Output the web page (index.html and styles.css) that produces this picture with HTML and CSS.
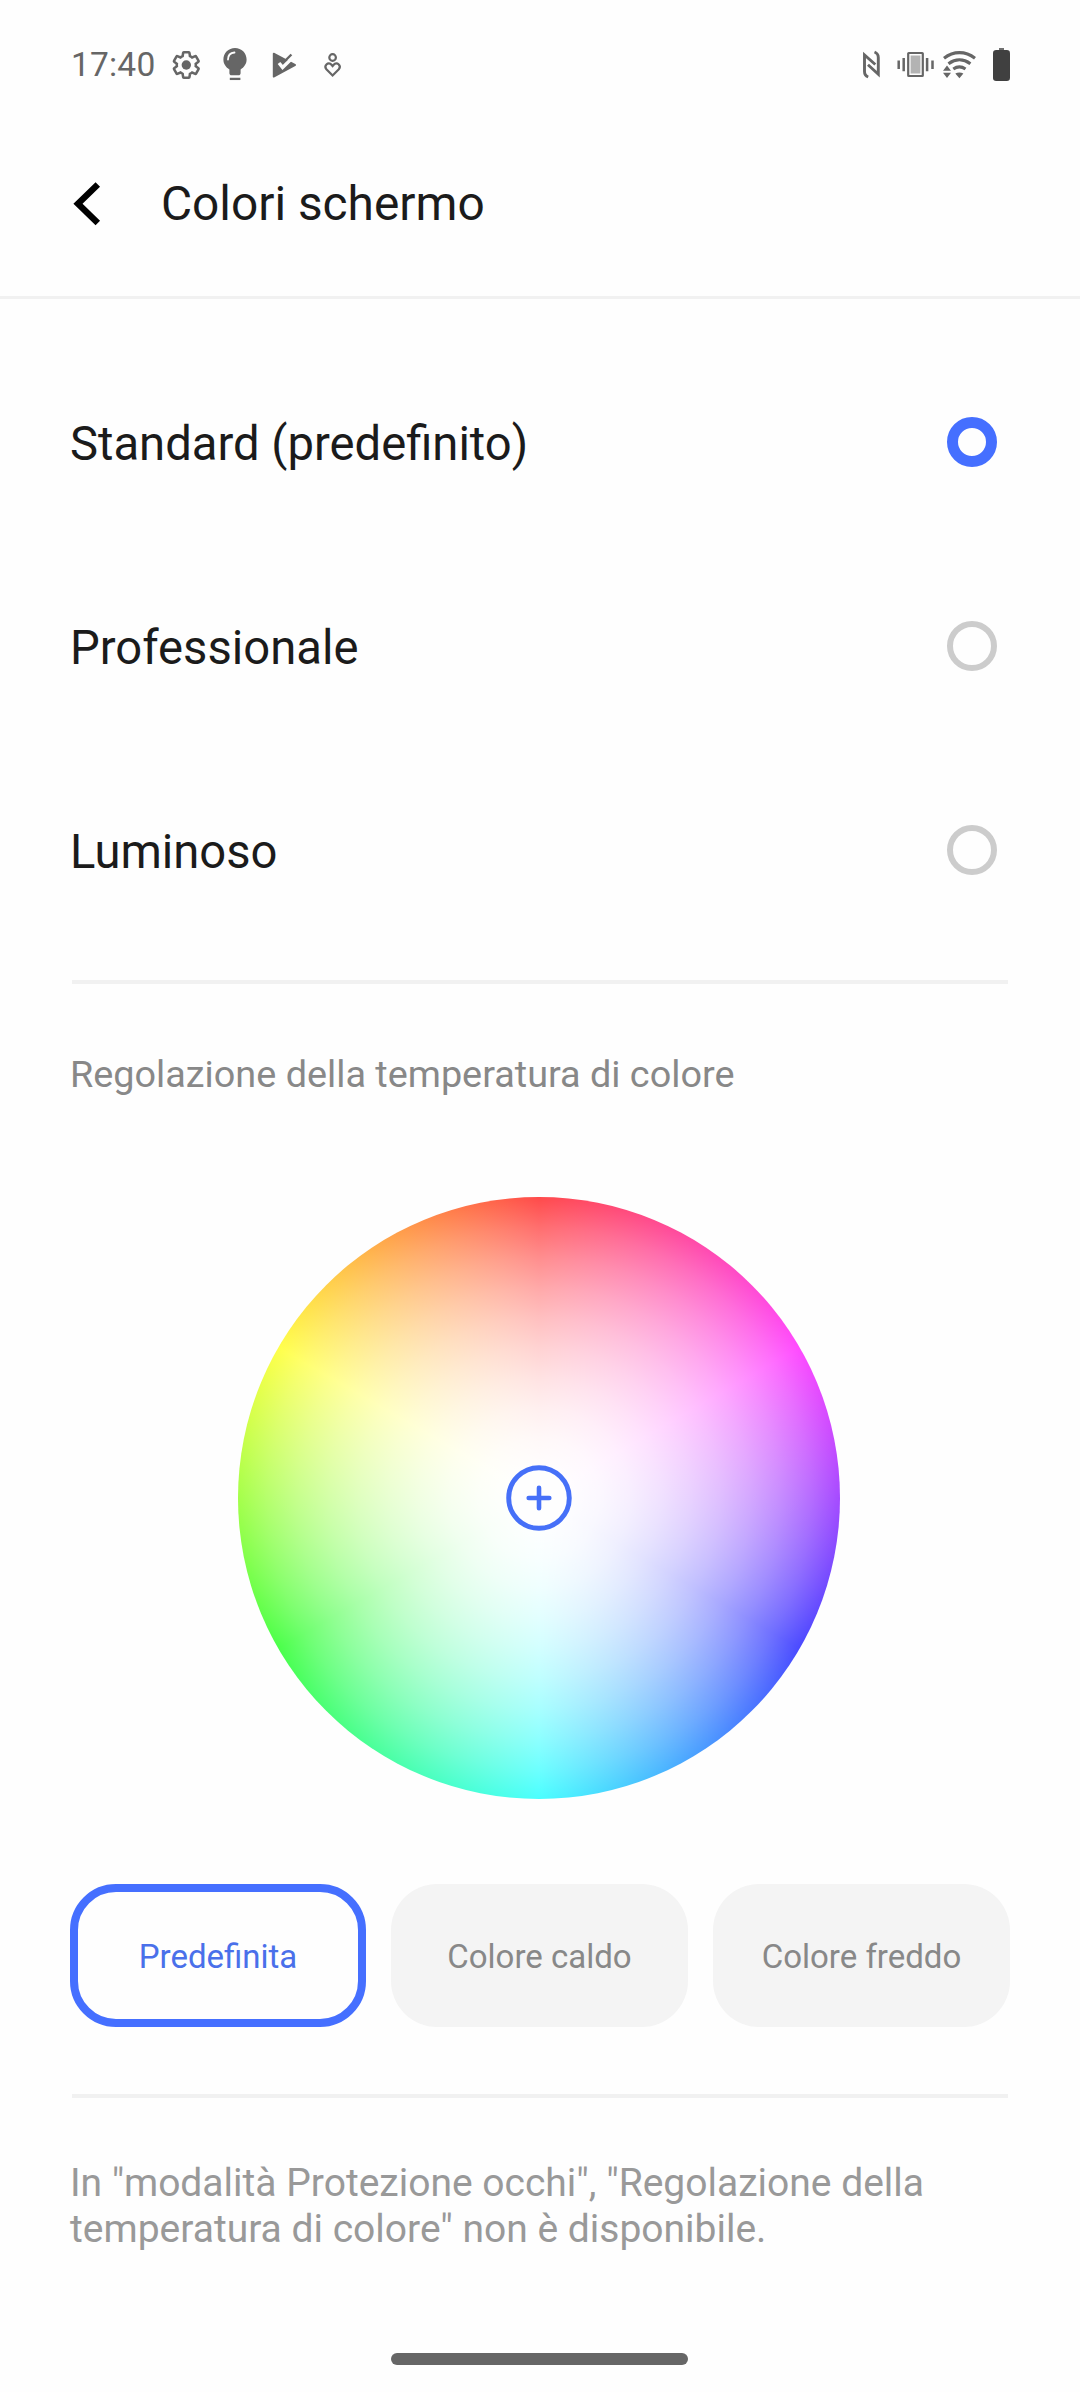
FILE: index.html
```html
<!DOCTYPE html>
<html lang="it">
<head>
<meta charset="utf-8">
<title>Colori schermo</title>
<link rel="stylesheet" href="styles.css">
</head>
<body>
<div class="status">
  <span class="time">17:40</span>
  <div class="status-left">
    <svg width="32" height="40" viewBox="170 45 32 40"><g transform="translate(186.3 65) scale(1.27) translate(-12 -12)"><path d="M19.43 12.98c.04-.32.07-.64.07-.98s-.03-.66-.07-.98l2.11-1.65c.19-.15.24-.42.12-.64l-2-3.46c-.12-.22-.39-.3-.61-.22l-2.49 1c-.52-.4-1.08-.73-1.69-.98l-.38-2.65C14.46 2.18 14.25 2 14 2h-4c-.25 0-.46.18-.49.42l-.38 2.65c-.61.25-1.17.59-1.69.98l-2.49-1c-.23-.09-.49 0-.61.22l-2 3.46c-.13.22-.07.49.12.64l2.11 1.65c-.04.32-.07.65-.07.98s.03.66.07.98l-2.11 1.65c-.19.15-.24.42-.12.64l2 3.46c.12.22.39.3.61.22l2.49-1c.52.4 1.08.73 1.69.98l.38 2.65c.03.24.24.42.49.42h4c.25 0 .46-.18.49-.42l.38-2.65c.61-.25 1.17-.59 1.69-.98l2.49 1c.23.09.49 0 .61-.22l2-3.46c.12-.22.07-.49-.12-.64z" fill="none" stroke="#666" stroke-width="2"/><circle cx="12" cy="12" r="3.7" fill="#666"/></g></svg>
    <svg width="32" height="40" viewBox="219 45 32 40"><path d="M235 48c-6.500 0-11.600 5.100-11.600 11.500 0 4.500 2.600 7.800 6 10v3.700c0 1.200.9 2.100 2.100 2.100h7c1.200 0 2.100-.9 2.100-2.100v-3.700c3.400-2.200 6-5.500 6-10C246.600 53.100 241.500 48 235 48z" fill="#666"/><path d="M229.800 78.900h10.600" stroke="#666" stroke-width="2.300"/><path d="M228 59.500c0-4 2.600-6.600 6.500-7" fill="none" stroke="#fefefe" stroke-width="1.800" stroke-linecap="round"/></svg>
    <svg width="32" height="40" viewBox="268 45 32 40"><path d="M272.800 53.600c0-.7.700-1.100 1.300-.8l21.200 11.300c1 .5 1 1.400 0 2l-21.200 11.400c-.6.300-1.300 0-1.300-.8z" fill="#666"/><path d="M279 63l3.600 4.400 13.500-13.200" fill="none" stroke="#fefefe" stroke-width="3.400"/><path d="M285.400 60.500l6-6" stroke="#666" stroke-width="2.400"/></svg>
    <svg width="32" height="40" viewBox="317 45 32 40" fill="none" stroke="#666" stroke-width="2.200"><circle cx="332.600" cy="57.500" r="3.300"/><path d="M332.600 75.500l-6.200-6.200c-3-3.700 2-8.300 5.100-4.500l1.100 1.300 1.100-1.300c3.100-3.800 8.100.8 5.100 4.500z"/></svg>
  </div>
  <div class="status-right">
    <svg width="32" height="40" viewBox="856 45 32 40" fill="none" stroke="#666" stroke-width="2.900"><path d="M868.200 77c-2.500-1-3.700-2.800-3.700-5.500V55l10.800 9.500"/><path d="M874.500 52c2.500 1 3.800 2.800 3.800 5.500v16.700l-10.300-9.400"/></svg>
    <svg width="42" height="40" viewBox="894 45 42 40"><rect x="908.200" y="53" width="14.600" height="23" rx=".6" fill="#fefefe" stroke="#666" stroke-width="2.200"/><rect x="910.600" y="55.500" width="9.800" height="18" fill="#b3b3b3"/><path d="M903.700 58v13.200M898.700 60.400v8.600M927.100 58v13.200M932.500 60.400v8.600" stroke="#666" stroke-width="2.500"/></svg>
    <svg width="38" height="40" viewBox="942 45 38 40"><path d="M944 58.200c9.600-7.400 21.300-7.400 31 0M948.500 63.700c6.900-5 15-5 21.900 0M953.300 69c3.900-2.600 8.300-2.600 12.200 0" fill="none" stroke="#666" stroke-width="3.200"/><path d="M943 70.700h8l-4-5.200zM943 72.700h8l-4 5.300zM955.300 73.600c2.600-1.500 5.500-1.500 8.100 0l-4 4.600z" fill="#666"/></svg>
    <svg width="26" height="40" viewBox="986 45 26 40"><path d="M999 48h5v3h-5z" fill="#707070"/><rect x="993" y="50" width="17" height="31" rx="3.200" fill="#404040"/></svg>
  </div>
</div>
<header class="header">
  <svg class="back" width="30" height="50" viewBox="72 180 30 50"><path d="M97.800 185.500L78 204.700l19.800 19.300" fill="none" stroke="#000" stroke-width="6.400"/></svg>
  <h1 class="title">Colori schermo</h1>
</header>
<main class="content">
  <div class="options">
    <div class="option"><span>Standard (predefinito)</span><i class="radio selected"></i></div>
    <div class="option"><span>Professionale</span><i class="radio"></i></div>
    <div class="option"><span>Luminoso</span><i class="radio"></i></div>
  </div>
  <div class="divider"></div>
  <h2 class="subtitle">Regolazione della temperatura di colore</h2>
  <div class="wheel">
    <svg width="66" height="66" viewBox="0 0 66 66" fill="none" stroke="#4670f8"><circle cx="33" cy="33" r="30.300" fill="#fefefe" stroke-width="4.900"/><path d="M22.700 33h20.600M33 22.700v20.600" stroke-width="4.600" stroke-linecap="round"/></svg>
  </div>
  <div class="chips">
    <div class="chip active">Predefinita</div>
    <div class="chip">Colore caldo</div>
    <div class="chip">Colore freddo</div>
  </div>
  <div class="divider"></div>
  <p class="note">In "modalità Protezione occhi", "Regolazione della temperatura di colore" non è disponibile.</p>
</main>
<div class="home-bar"></div>
</body>
</html>
```
FILE: styles.css
```css
* {
  box-sizing: border-box;
}

body {
  margin: 0;
  width: 1080px;
  height: 2392px;
  background: #fefefe;
  font-family: Roboto, sans-serif;
  color: #1b1b1b;
  overflow: hidden;
}

svg {
  display: block;
}

.status {
  height: 130px;
  padding: 45px 68px 0 71px;
  display: flex;
}

.time {
  width: 99px;
  font-size: 33.5px;
  line-height: 39px;
  letter-spacing: 0.2px;
  color: #666;
}

.status-left {
  display: flex;
  gap: 17px;
}

.status-right {
  display: flex;
  gap: 6px;
  margin-left: auto;
}

.header {
  height: 169px;
  padding: 0 72px 18px;
  border-bottom: 3px solid #f1f1f1;
  display: flex;
  align-items: center;
}

.title {
  margin: 0 0 0 59px;
  font-size: 47.8px;
  font-weight: 400;
  line-height: 56px;
}

.content {
  padding: 41px 70px 0;
}

.options {
  height: 640px;
}

.option {
  height: 204px;
  padding-right: 13px;
  display: flex;
  align-items: center;
  justify-content: space-between;
  font-size: 47.2px;
}

.option span {
  padding-top: 4px;
}

.radio {
  width: 50px;
  height: 50px;
  border: 6px solid #ccc;
  border-radius: 50%;
}

.radio.selected {
  border: 11px solid #456fff;
}

.divider {
  height: 4px;
  margin: 0 2px;
  background: #f1f1f1;
}

.subtitle {
  margin: 68px 0 0;
  font-size: 37.8px;
  font-weight: 400;
  line-height: 44px;
  color: #888;
}

.wheel {
  width: 602px;
  height: 602px;
  margin: 101px 0 0 168px;
  border-radius: 50%;
  display: flex;
  align-items: center;
  justify-content: center;
  background:
    radial-gradient(circle closest-side,
      rgba(255, 255, 255, 1) 0%,
      rgba(255, 255, 255, 0.993) 10%,
      rgba(255, 255, 255, 0.972) 20%,
      rgba(255, 255, 255, 0.937) 30%,
      rgba(255, 255, 255, 0.888) 40%,
      rgba(255, 255, 255, 0.825) 50%,
      rgba(255, 255, 255, 0.748) 60%,
      rgba(255, 255, 255, 0.657) 70%,
      rgba(255, 255, 255, 0.552) 80%,
      rgba(255, 255, 255, 0.433) 90%,
      rgba(255, 255, 255, 0.29) 100%),
    conic-gradient(#f00, #f0f, #00f, #0ff, #0f0, #ff0, #f00);
}

.chips {
  margin-top: 85px;
  margin-bottom: 67px;
  display: grid;
  grid-template-columns: 296px 297px 297px;
  gap: 25px;
}

.chip {
  height: 143px;
  padding-top: 2px;
  border-radius: 46px;
  background: #f4f4f4;
  color: #888;
  font-size: 33px;
  display: flex;
  align-items: center;
  justify-content: center;
}

.chip.active {
  border: 8px solid #456fff;
  background: #fefefe;
  color: #4a70ea;
}

.note {
  margin: 62px 0 0;
  font-size: 39px;
  line-height: 46px;
  color: #999;
}

.home-bar {
  width: 297px;
  height: 12px;
  margin: 101px 0 0 391px;
  border-radius: 6px;
  background: #666;
}
```
